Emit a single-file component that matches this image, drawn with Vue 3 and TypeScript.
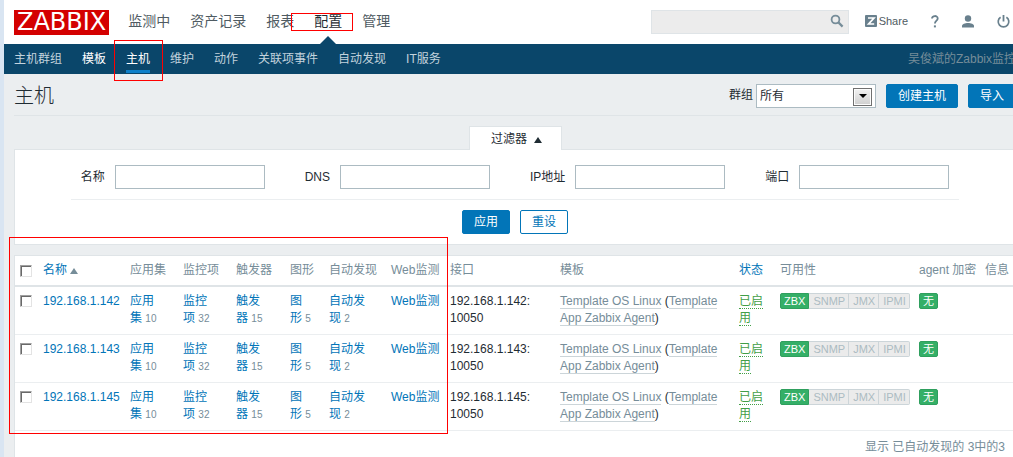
<script setup lang="ts">
import { ref } from 'vue'

interface Host {
  ip: string
  checked: boolean
}

const mainMenu = ['监测中', '资产记录', '报表', '配置', '管理']
const activeMain = '配置'

const subMenu = ['主机群组', '模板', '主机', '维护', '动作', '关联项事件', '自动发现', 'IT服务']
const activeSub = '主机'
const hoveredSub = '模板'

const filters = [
  { id: 'name', label: '名称' },
  { id: 'dns', label: 'DNS' },
  { id: 'ip', label: 'IP地址' },
  { id: 'port', label: '端口' },
]

const counters = [
  { label: '应用集', count: 10 },
  { label: '监控项', count: 32 },
  { label: '触发器', count: 15 },
  { label: '图形', count: 5 },
  { label: '自动发现', count: 2 },
]

const hosts = ref<Host[]>([
  { ip: '192.168.1.142', checked: false },
  { ip: '192.168.1.143', checked: false },
  { ip: '192.168.1.145', checked: false },
])

const allChecked = ref(false)
const group = ref('所有')

function toggleAll(): void {
  hosts.value.forEach((h) => (h.checked = allChecked.value))
}
</script>

<template>
  <div class="page">
    <header class="top">
      <a href="#" class="logo">ZABBIX</a>
      <nav class="main-menu">
        <a v-for="m in mainMenu" :key="m" href="#" :class="{ active: m === activeMain }">{{ m }}</a>
      </nav>
      <div class="tools">
        <form class="search" @submit.prevent>
          <input type="text" aria-label="搜索" />
          <button type="submit" aria-label="搜索">
            <svg width="14" height="14" viewBox="0 0 14 14">
              <circle cx="5.5" cy="5.5" r="3.9" fill="none" stroke="#768d99" stroke-width="1.8" />
              <path d="M8.4 8.4L12.6 12.6" stroke="#768d99" stroke-width="2.2" />
            </svg>
          </button>
        </form>
        <a href="#" class="share">
          <svg width="12" height="12" viewBox="0 0 12 12">
            <rect width="12" height="12" rx="1" fill="#69808d" />
            <path d="M3 3H9L3.6 9H9.2" fill="none" stroke="#fff" stroke-width="1.7" />
          </svg>
          <span>Share</span>
        </a>
        <a href="#" class="tool" aria-label="帮助">
          <svg width="8" height="13" viewBox="0 0 8 13">
            <path d="M1 3.6C1 .2 6.7.2 6.7 3.4C6.7 5.6 3.9 5.6 3.9 8.6" fill="none" stroke="#69808d" stroke-width="1.8" />
            <rect x="2.9" y="10.4" width="2" height="2" fill="#69808d" />
          </svg>
        </a>
        <a href="#" class="tool" aria-label="用户">
          <svg width="12" height="13" viewBox="0 0 12 13">
            <circle cx="6" cy="3.5" r="3.2" fill="#69808d" />
            <path d="M0 12.5V11C0 9 3 8 6 8S12 9 12 11V12.5Z" fill="#69808d" />
          </svg>
        </a>
        <a href="#" class="tool" aria-label="退出">
          <svg width="13" height="13" viewBox="0 0 13 13">
            <path d="M3.6 2.2A5.3 5.3 0 1 0 9.4 2.2" fill="none" stroke="#69808d" stroke-width="1.7" />
            <path d="M6.5 0V6.5" stroke="#69808d" stroke-width="1.8" />
          </svg>
        </a>
      </div>
    </header>

    <nav class="sub-menu">
      <a
        v-for="s in subMenu"
        :key="s"
        href="#"
        :class="{ active: s === activeSub, hovered: s === hoveredSub }"
      >{{ s }}</a>
      <span class="server">吴俊斌的Zabbix监控</span>
    </nav>

    <main>
      <div class="title-row">
        <h1>主机</h1>
        <form class="title-form" @submit.prevent>
          <label for="group">群组</label>
          <span class="select">
            <select id="group" v-model="group">
              <option>所有</option>
            </select>
          </span>
          <button type="button" class="btn">创建主机</button>
          <button type="button" class="btn">导入</button>
        </form>
      </div>

      <div class="tab-row">
        <button type="button" class="filter-tab">过滤器<i class="up"></i></button>
      </div>
      <form class="filter" @submit.prevent>
        <div class="fields">
          <div v-for="f in filters" :key="f.id" class="field">
            <label :for="f.id">{{ f.label }}</label>
            <input :id="f.id" type="text" />
          </div>
        </div>
        <div class="actions">
          <button type="submit" class="btn">应用</button>
          <button type="reset" class="btn alt">重设</button>
        </div>
      </form>

      <section class="list">
        <table>
          <colgroup>
            <col class="c-check" />
            <col class="c-name" />
            <col class="c-count" />
            <col class="c-count" />
            <col class="c-trigger" />
            <col class="c-graph" />
            <col class="c-discovery" />
            <col class="c-web" />
            <col class="c-interface" />
            <col />
            <col class="c-status" />
            <col class="c-avail" />
            <col class="c-agent" />
            <col class="c-info" />
          </colgroup>
          <thead>
            <tr>
              <th><input v-model="allChecked" type="checkbox" aria-label="全选" @change="toggleAll" /></th>
              <th><a href="#">名称<i class="up sort"></i></a></th>
              <th v-for="c in counters" :key="c.label">{{ c.label }}</th>
              <th>Web监测</th>
              <th>接口</th>
              <th>模板</th>
              <th><a href="#">状态</a></th>
              <th>可用性</th>
              <th>agent 加密</th>
              <th>信息</th>
            </tr>
          </thead>
          <tbody>
            <tr v-for="h in hosts" :key="h.ip">
              <td><input v-model="h.checked" type="checkbox" :aria-label="h.ip" /></td>
              <td><a href="#">{{ h.ip }}</a></td>
              <td v-for="c in counters" :key="c.label">
                <a href="#">{{ c.label }}</a>&nbsp;<sub>{{ c.count }}</sub>
              </td>
              <td><a href="#">Web监测</a></td>
              <td>{{ h.ip }}: 10050</td>
              <td>
                <a href="#" class="template">Template OS Linux</a> (<a href="#" class="template">Template App Zabbix Agent</a>)
              </td>
              <td><a href="#" class="enabled">已启用</a></td>
              <td>
                <div class="badges">
                  <span class="badge on">ZBX</span>
                  <span class="badge">SNMP</span>
                  <span class="badge">JMX</span>
                  <span class="badge">IPMI</span>
                </div>
              </td>
              <td><div class="badges"><span class="badge on">无</span></div></td>
              <td></td>
            </tr>
          </tbody>
        </table>
        <div class="summary">显示 已自动发现的 3中的3</div>
      </section>
    </main>

    <div class="mark mark-config"></div>
    <div class="mark mark-hosts"></div>
    <div class="mark mark-list"></div>
  </div>
</template>

<style>
body {
  margin: 0;
  background: #ebeef0;
}
</style>

<style scoped>
* {
  box-sizing: border-box;
}
.page {
  position: relative;
  display: flex;
  flex-direction: column;
  min-height: 100vh;
  overflow: hidden;
  border-left: 4px solid #d9e5f2;
  background: #ebeef0;
  color: #1f2c33;
  font: 12px/17px "Liberation Sans", "Noto Sans CJK SC", sans-serif;
}
a {
  color: #0275b8;
  text-decoration: none;
}
button,
input,
select {
  font: inherit;
  color: inherit;
  margin: 0;
}
svg {
  display: block;
}

.top {
  display: flex;
  align-items: center;
  height: 44px;
  padding: 0 3px 0 10px;
  background: #fff;
}
.logo {
  padding: 0 3px;
  background: #d40000;
  color: #fff;
  font: 24px/25px "DejaVu Sans", sans-serif;
}
.main-menu {
  display: flex;
  gap: 20px;
  margin-left: 19px;
  align-self: stretch;
  font-size: 14px;
  line-height: 42px;
}
.main-menu a {
  position: relative;
  color: #4f5b62;
}
.main-menu .active {
  color: #1f2c33;
}
.main-menu .active::after {
  content: "";
  position: absolute;
  left: 50%;
  bottom: 0;
  margin-left: -8px;
  border: 8px solid transparent;
  border-top: 0;
  border-bottom-color: #0a466a;
}
.tools {
  display: flex;
  align-items: center;
  align-self: flex-start;
  margin-left: auto;
  gap: 23px;
  height: 42px;
}
.search {
  display: flex;
  width: 198px;
  height: 24px;
  margin: 2px -7px 0 0;
  border: 1px solid #dfe4e7;
  background: #ececec;
}
.search input {
  flex: 1;
  min-width: 0;
  border: 0;
  background: none;
}
.search button {
  padding: 0 4px 2px;
  border: 0;
  background: none;
}
.share {
  display: flex;
  align-items: center;
  gap: 2px;
  color: #4f5b62;
  font-size: 11px;
}

.sub-menu {
  display: flex;
  gap: 20px;
  height: 30px;
  padding-left: 10px;
  margin-right: -3px;
  background: #0a466a;
  line-height: 30px;
  white-space: nowrap;
}
.sub-menu a {
  position: relative;
  color: #c3d3dd;
}
.sub-menu .active,
.sub-menu .hovered {
  color: #fff;
}
.sub-menu .active::after {
  content: "";
  position: absolute;
  left: 0;
  right: 0;
  bottom: 1px;
  height: 3px;
  background: #0f80c9;
}
.server {
  margin-left: auto;
  color: #768d99;
}

main {
  flex: 1;
  display: flex;
  flex-direction: column;
  padding-left: 10px;
  margin-right: -3px;
}
.title-row {
  display: flex;
  align-items: center;
  justify-content: space-between;
  height: 42px;
  padding-top: 2px;
  border-bottom: 1px solid #dfe4e7;
}
h1 {
  margin: 0;
  font-size: 20px;
  font-weight: 300;
  line-height: 24px;
}
.title-form {
  display: flex;
  align-items: center;
}
.select {
  position: relative;
  width: 120px;
  height: 24px;
  margin-left: 3px;
}
.select select {
  display: block;
  width: 100%;
  height: 100%;
  padding: 1px 3px 0;
  border: 1px solid #acbbc2;
  border-radius: 0;
  background: #fff;
  appearance: none;
}
.select::before {
  content: "";
  position: absolute;
  top: 4px;
  right: 4px;
  width: 17px;
  height: 16px;
  border: 1px solid #707070;
  background: linear-gradient(#f2f2f2, #cfcfcf);
  box-shadow: inset 0 0 0 1px #fcfcfc;
  pointer-events: none;
}
.select::after {
  content: "";
  position: absolute;
  top: 10px;
  right: 9px;
  border: 4px solid transparent;
  border-top-color: #000;
  border-bottom: 0;
  pointer-events: none;
}
.btn {
  height: 24px;
  padding: 0 11px;
  border: 1px solid #0275b8;
  border-radius: 2px;
  background: #0275b8;
  color: #fff;
  line-height: 22px;
}
.title-form .btn {
  margin-left: 10px;
}
.btn.alt {
  background: #fff;
  color: #0275b8;
}

.tab-row {
  display: flex;
  justify-content: center;
  margin-top: 10px;
}
.filter-tab {
  position: relative;
  height: 24px;
  width: 93px;
  margin-bottom: -1px;
  padding: 2px 0 0 3px;
  border: 1px solid #dfe4e7;
  border-bottom: 0;
  background: #fff;
}
.up {
  display: inline-block;
  margin-left: 7px;
  border: 4px solid transparent;
  border-top: 0;
  border-bottom: 6px solid #1f2c33;
}
.up.sort {
  margin-left: 3px;
  border-bottom-color: #768d99;
}
.filter {
  display: flex;
  flex-direction: column;
  align-items: center;
  padding: 15px 0 10px;
  border: 1px solid #dfe4e7;
  background: #fff;
}
.fields {
  display: flex;
  gap: 40px;
  padding: 0 10px 10px;
  border-bottom: 1px solid #ebeef0;
}
.field {
  display: flex;
  align-items: center;
  gap: 10px;
}
.field input {
  width: 150px;
  height: 24px;
  padding: 0 4px;
  border: 1px solid #acbbc2;
}
.actions {
  display: flex;
  gap: 10px;
  padding-top: 10px;
}

.list {
  flex: 1;
  margin-top: 10px;
  border: 1px solid #dfe4e7;
  border-bottom: 0;
  background: #fff;
}
table {
  width: 100%;
  table-layout: fixed;
  border-collapse: separate;
  border-spacing: 0;
}
.c-check { width: 23px; }
.c-name { width: 87px; }
.c-count { width: 53px; }
.c-trigger { width: 54px; }
.c-graph { width: 39px; }
.c-discovery { width: 62px; }
.c-web { width: 59px; }
.c-interface { width: 110px; }
.c-status { width: 41px; }
.c-avail { width: 139px; }
.c-agent { width: 66px; }
.c-info { width: 35px; }
th {
  padding: 6px 5px;
  border-bottom: 2px solid #dfe4e7;
  color: #768d99;
  font-weight: 400;
  text-align: left;
  white-space: nowrap;
}
td {
  padding: 6px 5px 7px;
  border-bottom: 1px solid #ebeef0;
  vertical-align: top;
}
input[type="checkbox"] {
  display: block;
  width: 12px;
  height: 12px;
  margin: 2px 0;
  border: 1px solid #e3e3e3;
  border-top-color: #a0a0a0;
  border-left-color: #a0a0a0;
  background: #fff;
  box-shadow: inset 1px 1px 0 #696969;
  appearance: none;
}
input[type="checkbox"]:checked {
  background: #0275b8;
}
sub {
  color: #768d99;
  font-size: 10px;
  line-height: 1;
  vertical-align: baseline;
}
.template {
  border-bottom: 1px solid #ccd5d9;
  color: #768d99;
}
.enabled {
  border-bottom: 1px dotted #429e47;
  color: #429e47;
}
.badges {
  display: flex;
}
.badge {
  padding: 0 3px;
  border: 1px solid #ccd5d9;
  background: #ebebeb;
  color: #acbbc2;
  font-size: 11px;
  line-height: 14px;
}
.badge:first-child {
  border-radius: 2px 0 0 2px;
}
.badge:last-child {
  border-radius: 0 2px 2px 0;
}
.badge:only-child {
  border-radius: 2px;
}
.badge + .badge {
  border-left-width: 0;
  padding-left: 4px;
}
.badge.on {
  border-color: #2f9f5e;
  background: #34af67;
  color: #fff;
}
.summary {
  padding: 8px 10px 0;
  color: #768d99;
  text-align: right;
}

.mark {
  position: absolute;
  border: 1px solid #f00;
  pointer-events: none;
}
.mark-config {
  left: 287px;
  top: 13px;
  width: 62px;
  height: 18px;
}
.mark-hosts {
  left: 110px;
  top: 40px;
  width: 49px;
  height: 41px;
}
.mark-list {
  left: 5px;
  top: 237px;
  width: 439px;
  height: 197px;
}
</style>
